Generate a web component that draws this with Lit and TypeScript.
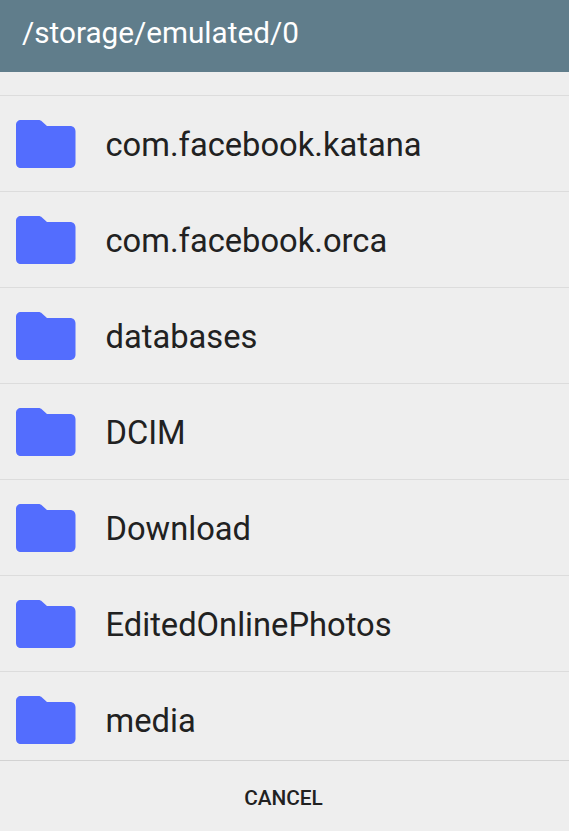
import { LitElement, html, css } from "lit";
import { customElement } from "lit/decorators.js";

const folders = [
  "com.facebook.katana",
  "com.facebook.orca",
  "databases",
  "DCIM",
  "Download",
  "EditedOnlinePhotos",
  "media",
];

@customElement("app-root")
export class AppRoot extends LitElement {
  static styles = css`
    :host {
      display: flex;
      flex-direction: column;
      width: 569px;
      height: 831px;
      background: #eeeeee;
      font-family: Roboto, "Liberation Sans", sans-serif;
      color: #212121;
      overflow: hidden;
    }
    .header {
      flex: 0 0 72px;
      box-sizing: border-box;
      height: 72px;
      background: #607d8b;
      color: #ffffff;
      display: flex;
      align-items: center;
      padding: 0 22px 8px;
      font-size: 29.7px;
    }
    .list {
      flex: 1 1 auto;
      min-height: 0;
      overflow: hidden;
      padding-top: 23px;
    }
    .row {
      box-sizing: border-box;
      height: 96px;
      border-top: 1px solid #dcdcdc;
      display: flex;
      align-items: center;
      padding-left: 16px;
      gap: 29.5px;
      font-size: 32.7px;
    }
    .row svg {
      width: 60px;
      height: 48px;
      flex: none;
    }
    .row span {
      padding-top: 3px;
    }
    .footer {
      flex: 0 0 71px;
      box-sizing: border-box;
      height: 71px;
      padding: 3px 2px 0 0;
      border-top: 1px solid #d2d2d2;
      display: flex;
      align-items: center;
      justify-content: center;
      font-size: 20.8px;
      font-weight: 500;
    }
  `;

  render() {
    return html`
      <div class="header">/storage/emulated/0</div>
      <div class="list">
        ${folders.map(
          (name) => html`
            <div class="row">
              <svg viewBox="0 0 60 48" aria-hidden="true">
                <path
                  fill="#536dfe"
                  d="M5 0H22.5C24 0 25 .5 26 1.5L31 6H54C57.3 6 59.5 8.2 59.5 11.5V42.5C59.5 45.8 57.3 48 54 48H5C2 48 0 46 0 43V5C0 2 2 0 5 0Z"
                />
              </svg>
              <span>${name}</span>
            </div>
          `
        )}
      </div>
      <div class="footer">CANCEL</div>
    `;
  }
}
